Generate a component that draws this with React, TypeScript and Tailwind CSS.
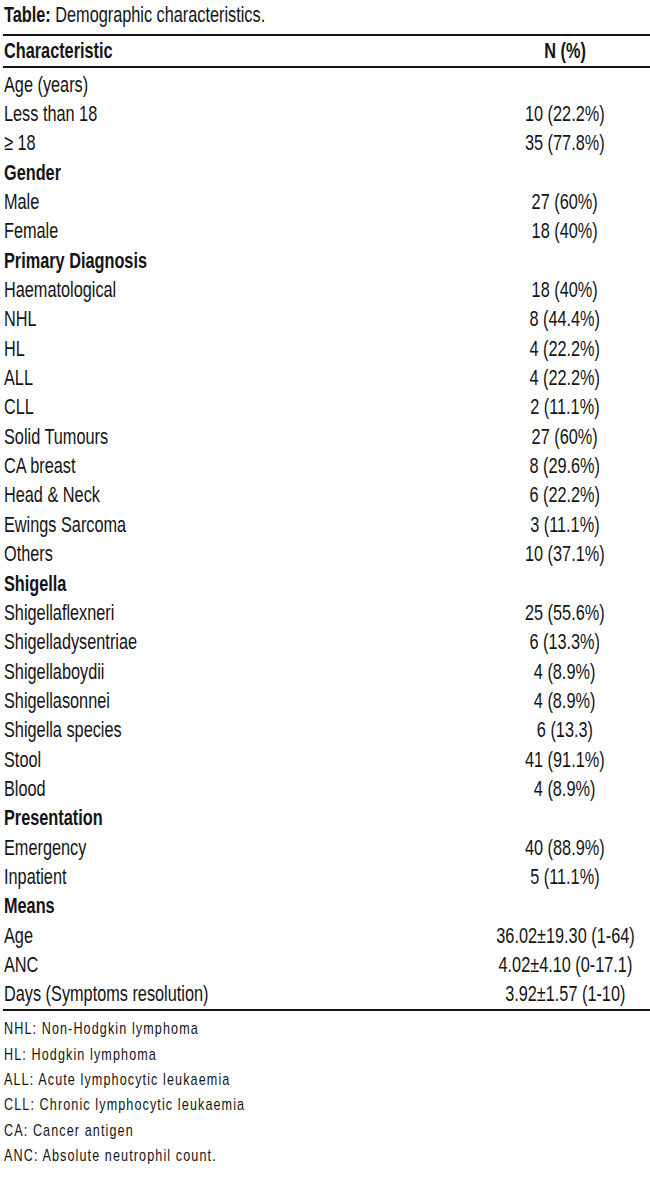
import React from 'react';

type Row = { label: string; value?: string; bold?: boolean };

const rows: Row[] = [
  { label: 'Age (years)' },
  { label: 'Less than 18', value: '10 (22.2%)' },
  { label: '≥ 18', value: '35 (77.8%)' },
  { label: 'Gender', bold: true },
  { label: 'Male', value: '27 (60%)' },
  { label: 'Female', value: '18 (40%)' },
  { label: 'Primary Diagnosis', bold: true },
  { label: 'Haematological', value: '18 (40%)' },
  { label: 'NHL', value: '8 (44.4%)' },
  { label: 'HL', value: '4 (22.2%)' },
  { label: 'ALL', value: '4 (22.2%)' },
  { label: 'CLL', value: '2 (11.1%)' },
  { label: 'Solid Tumours', value: '27 (60%)' },
  { label: 'CA breast', value: '8 (29.6%)' },
  { label: 'Head & Neck', value: '6 (22.2%)' },
  { label: 'Ewings Sarcoma', value: '3 (11.1%)' },
  { label: 'Others', value: '10 (37.1%)' },
  { label: 'Shigella', bold: true },
  { label: 'Shigellaflexneri', value: '25 (55.6%)' },
  { label: 'Shigelladysentriae', value: '6 (13.3%)' },
  { label: 'Shigellaboydii', value: '4 (8.9%)' },
  { label: 'Shigellasonnei', value: '4 (8.9%)' },
  { label: 'Shigella species', value: '6 (13.3)' },
  { label: 'Stool', value: '41 (91.1%)' },
  { label: 'Blood', value: '4 (8.9%)' },
  { label: 'Presentation', bold: true },
  { label: 'Emergency', value: '40 (88.9%)' },
  { label: 'Inpatient', value: '5 (11.1%)' },
  { label: 'Means', bold: true },
  { label: 'Age', value: '36.02±19.30 (1-64)' },
  { label: 'ANC', value: '4.02±4.10 (0-17.1)' },
  { label: 'Days (Symptoms resolution)', value: '3.92±1.57 (1-10)' },
];

const notes = [
  'NHL: Non-Hodgkin lymphoma',
  'HL: Hodgkin lymphoma',
  'ALL: Acute lymphocytic leukaemia',
  'CLL: Chronic lymphocytic leukaemia',
  'CA: Cancer antigen',
  'ANC: Absolute neutrophil count.',
];

// no condensed face installed, so narrow Liberation Sans by scaling
const font = { fontFamily: '"Liberation Sans", Arial, sans-serif' };

const Narrow: React.FC<{ children: React.ReactNode; center?: boolean }> = ({ children, center }) => (
  <span className={`inline-block whitespace-nowrap scale-x-[0.74] ${center ? 'origin-center' : 'origin-left'}`}>
    {children}
  </span>
);

export default function App() {
  return (
    <div className="w-[650px] h-[1179px] bg-white text-[#141414] overflow-hidden" style={font}>
      <div className="h-[34px] pt-[3px] pl-[4px] text-[22px] leading-[24px]">
        <Narrow>
          <span className="font-bold">Table:</span> Demographic characteristics.
        </Narrow>
      </div>
      <div className="ml-[3px] border-t-2 border-b-2 border-[#141414] h-[34px] flex items-center text-[22px] font-bold leading-none">
        <div className="flex-1 pl-[1px]">
          <Narrow>Characteristic</Narrow>
        </div>
        <div className="w-[170px] flex justify-center">
          <Narrow center>N (%)</Narrow>
        </div>
      </div>
      <div className="ml-[3px] pt-[2px] border-b-2 border-[#141414]">
        {rows.map((r, i) => (
          <div key={i} className="h-[29.35px] flex items-center text-[22px] leading-none">
            <div className={`flex-1 pl-[1px] ${r.bold ? 'font-bold' : ''}`}>
              <Narrow>{r.label}</Narrow>
            </div>
            <div className="w-[170px] flex justify-center">
              {r.value && <Narrow center>{r.value}</Narrow>}
            </div>
          </div>
        ))}
      </div>
      <div className="pt-[5px] pl-[4px]">
        {notes.map((n, i) => (
          <div key={i} className="h-[25.4px] flex items-center text-[17px] tracking-[1.5px] leading-none">
            <Narrow>{n}</Narrow>
          </div>
        ))}
      </div>
    </div>
  );
}
